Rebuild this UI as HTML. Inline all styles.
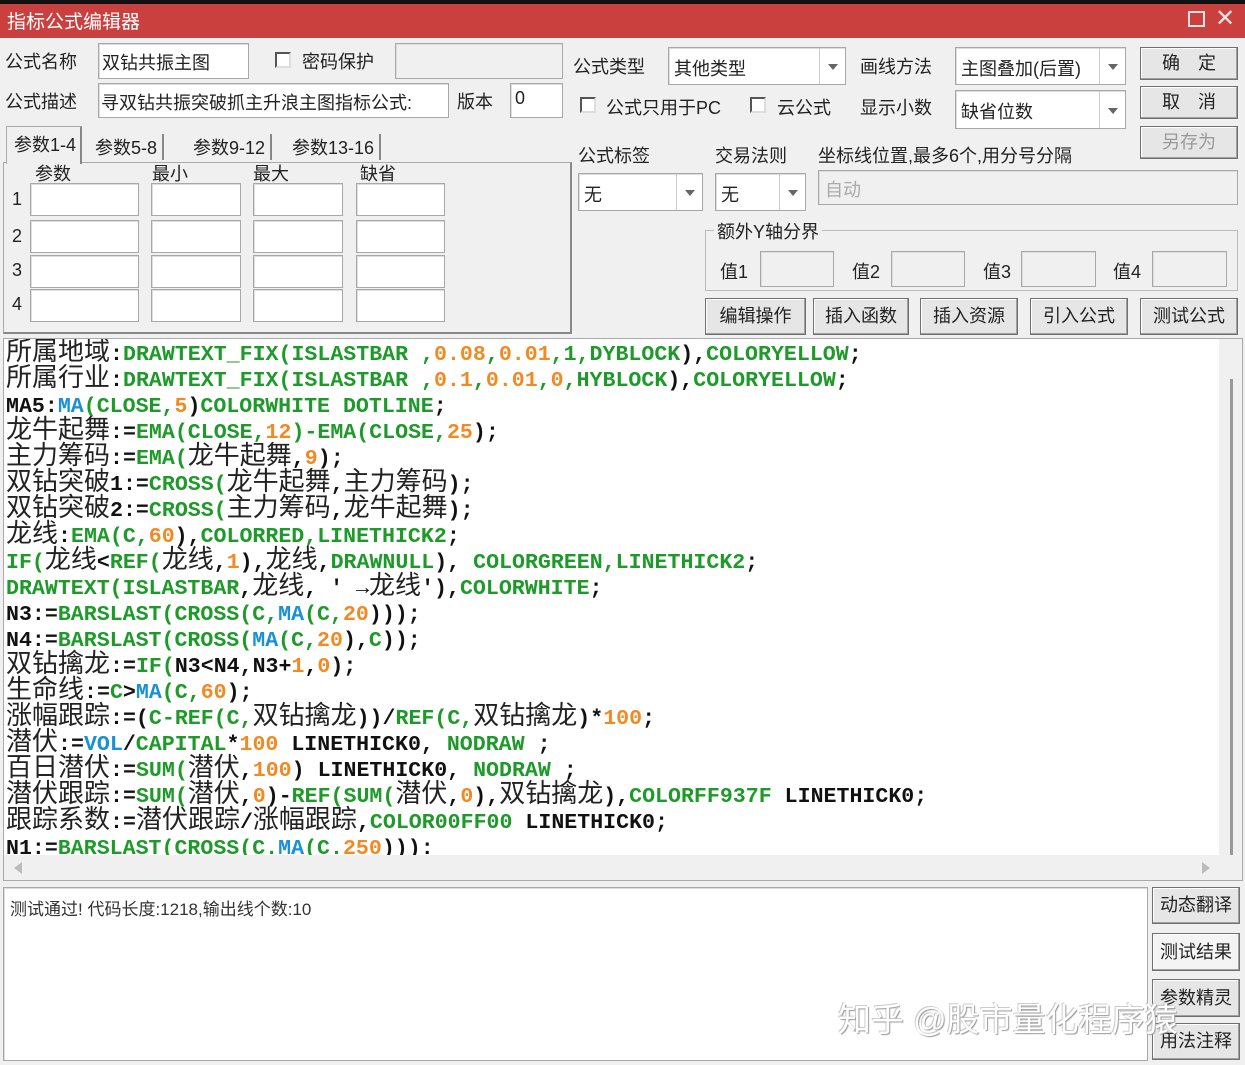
<!DOCTYPE html>
<html><head><meta charset="utf-8"><style>
*{margin:0;padding:0;box-sizing:border-box}
body{width:1245px;height:1065px;background:#f0f0f0;position:relative;overflow:hidden;font-family:"Liberation Sans","Noto Sans CJK SC",sans-serif;font-size:18px;color:#222}
.a{position:absolute;white-space:nowrap}
.in{position:absolute;background:#fff;border:1px solid #a8a8a8;box-shadow:inset 1px 1px 0 #ddd}
.btn{position:absolute;background:#e6e6e6;border:1px solid #707070;box-shadow:inset -1px -1px 0 #a0a0a0,inset 1px 1px 0 #fff;text-align:center;font-size:18px}
.cb{position:absolute;width:16px;height:16px;background:#fff;border:2px solid #555;border-right-color:#ddd;border-bottom-color:#ddd}
.dd{position:absolute;right:0;top:0;bottom:0;width:26px;border-left:1px solid #ccc}
.dd:after{content:"";position:absolute;left:8px;top:50%;margin-top:-2px;border:5px solid transparent;border-top:6px solid #666;border-bottom:0}
.code{position:absolute;left:3px;top:338px;width:1240px;height:543px;background:#fff;border:1px solid #aaa;overflow:hidden}
.l{position:absolute;left:2px;height:26px;line-height:26px;white-space:nowrap;font-family:"Liberation Mono",monospace;font-weight:bold;font-size:21.6px;color:#111}
.l i{font-style:normal;font-family:"Noto Sans CJK SC",sans-serif;font-weight:normal;font-size:26px;color:#222;line-height:0}
.g{color:#1e9a2a}.o{color:#f08a24}.b{color:#1a90d6}
</style></head><body>
<div class="a" style="left:0;top:0;width:1245px;height:4px;background:#111"></div>
<div class="a" style="left:0;top:4px;width:1245px;height:34px;background:#c9403f"></div>
<div class="a" style="left:7px;top:7px;color:#fff;font-size:19px">指标公式编辑器</div>
<div class="a" style="left:1188px;top:11px;width:17px;height:16px;border:2px solid #fff;opacity:.85"></div>
<div class="a" style="left:1215px;top:4px;color:#fff;font-size:24px;opacity:.85">✕</div>

<div class="a" style="left:5px;top:48px">公式名称</div>
<div class="in" style="left:98px;top:43px;width:151px;height:36px"></div>
<div class="a" style="left:102px;top:49px">双钻共振主图</div>
<div class="cb" style="left:275px;top:52px"></div>
<div class="a" style="left:302px;top:48px">密码保护</div>
<div class="in" style="left:395px;top:43px;width:168px;height:36px;background:#f0f0f0"></div>
<div class="a" style="left:5px;top:88px">公式描述</div>
<div class="in" style="left:98px;top:83px;width:351px;height:35px"></div>
<div class="a" style="left:101px;top:89px;width:345px;overflow:hidden">寻双钻共振突破抓主升浪主图指标公式:</div>
<div class="a" style="left:457px;top:88px">版本</div>
<div class="in" style="left:510px;top:83px;width:53px;height:35px"></div>
<div class="a" style="left:515px;top:88px">0</div>

<div class="a" style="left:573px;top:53px">公式类型</div>
<div class="in" style="left:668px;top:47px;width:178px;height:38px"><div class="dd"></div></div>
<div class="a" style="left:674px;top:55px">其他类型</div>
<div class="a" style="left:860px;top:53px">画线方法</div>
<div class="in" style="left:955px;top:47px;width:171px;height:38px"><div class="dd"></div></div>
<div class="a" style="left:961px;top:55px">主图叠加(后置)</div>
<div class="cb" style="left:580px;top:97px"></div>
<div class="a" style="left:606px;top:94px">公式只用于PC</div>
<div class="cb" style="left:750px;top:97px"></div>
<div class="a" style="left:777px;top:94px">云公式</div>
<div class="a" style="left:860px;top:94px">显示小数</div>
<div class="in" style="left:955px;top:90px;width:171px;height:39px"><div class="dd"></div></div>
<div class="a" style="left:961px;top:98px">缺省位数</div>
<div class="btn" style="left:1140px;top:47px;width:98px;height:33px;line-height:31px">确　定</div>
<div class="btn" style="left:1140px;top:86px;width:98px;height:33px;line-height:31px">取　消</div>
<div class="btn" style="left:1140px;top:126px;width:98px;height:33px;line-height:31px;color:#999">另存为</div>

<div class="a" style="left:3px;top:162px;width:569px;height:172px;border:1px solid #aaa;border-right:2px solid #888;border-bottom:2px solid #888"></div>
<div class="a" style="left:6px;top:126px;width:76px;height:38px;background:#f0f0f0;border:1px solid #aaa;border-bottom:none;border-right:2px solid #888"></div>
<div class="a" style="left:14px;top:131px">参数1-4</div>
<div class="a" style="left:95px;top:134px;border-right:2px solid #888;padding-right:5px">参数5-8</div>
<div class="a" style="left:163px;top:134px;border-right:2px solid #888;padding:0 5px 0 30px">参数9-12</div>
<div class="a" style="left:246px;top:134px;border-right:2px solid #888;padding:0 5px 0 46px">参数13-16</div>
<div class="a" style="left:35px;top:160px">参数</div>
<div class="a" style="left:152px;top:160px">最小</div>
<div class="a" style="left:253px;top:160px">最大</div>
<div class="a" style="left:360px;top:160px">缺省</div>
<div class="a" style="left:12px;top:189px">1</div><div class="a" style="left:12px;top:226px">2</div><div class="a" style="left:12px;top:260px">3</div><div class="a" style="left:12px;top:294px">4</div>
<div class="in" style="left:30px;top:183px;width:109px;height:33px"></div><div class="in" style="left:151px;top:183px;width:90px;height:33px"></div><div class="in" style="left:253px;top:183px;width:90px;height:33px"></div><div class="in" style="left:356px;top:183px;width:89px;height:33px"></div>
<div class="in" style="left:30px;top:220px;width:109px;height:33px"></div><div class="in" style="left:151px;top:220px;width:90px;height:33px"></div><div class="in" style="left:253px;top:220px;width:90px;height:33px"></div><div class="in" style="left:356px;top:220px;width:89px;height:33px"></div>
<div class="in" style="left:30px;top:255px;width:109px;height:33px"></div><div class="in" style="left:151px;top:255px;width:90px;height:33px"></div><div class="in" style="left:253px;top:255px;width:90px;height:33px"></div><div class="in" style="left:356px;top:255px;width:89px;height:33px"></div>
<div class="in" style="left:30px;top:289px;width:109px;height:33px"></div><div class="in" style="left:151px;top:289px;width:90px;height:33px"></div><div class="in" style="left:253px;top:289px;width:90px;height:33px"></div><div class="in" style="left:356px;top:289px;width:89px;height:33px"></div>

<div class="a" style="left:578px;top:142px">公式标签</div>
<div class="a" style="left:715px;top:142px">交易法则</div>
<div class="a" style="left:818px;top:142px">坐标线位置,最多6个,用分号分隔</div>
<div class="in" style="left:578px;top:173px;width:125px;height:38px"><div class="dd"></div></div>
<div class="a" style="left:584px;top:181px">无</div>
<div class="in" style="left:715px;top:173px;width:91px;height:38px"><div class="dd"></div></div>
<div class="a" style="left:721px;top:181px">无</div>
<div class="in" style="left:818px;top:170px;width:420px;height:35px;background:#f0f0f0"></div>
<div class="a" style="left:825px;top:176px;color:#aaa">自动</div>
<div class="a" style="left:705px;top:230px;width:533px;height:61px;border:1px solid #bbb"></div>
<div class="a" style="left:714px;top:218px;background:#f0f0f0;padding:0 3px">额外Y轴分界</div>
<div class="a" style="left:720px;top:258px">值1</div><div class="in" style="left:760px;top:251px;width:74px;height:36px;background:#f0f0f0"></div>
<div class="a" style="left:852px;top:258px">值2</div><div class="in" style="left:891px;top:251px;width:74px;height:36px;background:#f0f0f0"></div>
<div class="a" style="left:983px;top:258px">值3</div><div class="in" style="left:1021px;top:251px;width:75px;height:36px;background:#f0f0f0"></div>
<div class="a" style="left:1113px;top:258px">值4</div><div class="in" style="left:1152px;top:251px;width:75px;height:36px;background:#f0f0f0"></div>
<div class="btn" style="left:705px;top:298px;width:101px;height:37px;line-height:35px">编辑操作</div>
<div class="btn" style="left:813px;top:298px;width:96px;height:37px;line-height:35px">插入函数</div>
<div class="btn" style="left:920px;top:298px;width:98px;height:37px;line-height:35px">插入资源</div>
<div class="btn" style="left:1030px;top:298px;width:98px;height:37px;line-height:35px">引入公式</div>
<div class="btn" style="left:1140px;top:298px;width:98px;height:37px;line-height:35px">测试公式</div>

<div class="code">
<div class="l" style="top:3px"><i>所属地域</i>:<span class="g">DRAWTEXT_FIX(ISLASTBAR ,</span><span class="o">0.08</span><span class="g">,</span><span class="o">0.01</span><span class="g">,1,DYBLOCK</span>),<span class="g">COLORYELLOW</span>;</div>
<div class="l" style="top:29px"><i>所属行业</i>:<span class="g">DRAWTEXT_FIX(ISLASTBAR ,</span><span class="o">0.1</span><span class="g">,</span><span class="o">0.01</span><span class="g">,</span><span class="o">0</span><span class="g">,HYBLOCK</span>),<span class="g">COLORYELLOW</span>;</div>
<div class="l" style="top:55px">MA5:<span class="b">MA</span><span class="g">(CLOSE,</span><span class="o">5</span>)<span class="g">COLORWHITE DOTLINE</span>;</div>
<div class="l" style="top:81px"><i>龙牛起舞</i>:=<span class="g">EMA(CLOSE,</span><span class="o">12</span><span class="g">)-EMA(CLOSE,</span><span class="o">25</span>);</div>
<div class="l" style="top:107px"><i>主力筹码</i>:=<span class="g">EMA(</span><i>龙牛起舞</i>,<span class="o">9</span>);</div>
<div class="l" style="top:133px"><i>双钻突破</i>1:=<span class="g">CROSS(</span><i>龙牛起舞</i>,<i>主力筹码</i>);</div>
<div class="l" style="top:159px"><i>双钻突破</i>2:=<span class="g">CROSS(</span><i>主力筹码</i>,<i>龙牛起舞</i>);</div>
<div class="l" style="top:185px"><i>龙线</i>:<span class="g">EMA(C,</span><span class="o">60</span>),<span class="g">COLORRED,LINETHICK2</span>;</div>
<div class="l" style="top:211px"><span class="g">IF(</span><i>龙线</i>&lt;<span class="g">REF(</span><i>龙线</i>,<span class="o">1</span>),<i>龙线</i>,<span class="g">DRAWNULL</span>), <span class="g">COLORGREEN,LINETHICK2</span>;</div>
<div class="l" style="top:237px"><span class="g">DRAWTEXT(ISLASTBAR</span>,<i>龙线</i>, ' →<i>龙线</i>'),<span class="g">COLORWHITE</span>;</div>
<div class="l" style="top:263px">N3:=<span class="g">BARSLAST(CROSS(C,</span><span class="b">MA</span><span class="g">(C,</span><span class="o">20</span>)));</div>
<div class="l" style="top:289px">N4:=<span class="g">BARSLAST(CROSS(</span><span class="b">MA</span><span class="g">(C,</span><span class="o">20</span>),<span class="g">C</span>));</div>
<div class="l" style="top:315px"><i>双钻擒龙</i>:=<span class="g">IF(</span>N3&lt;N4,N3+<span class="o">1</span>,<span class="o">0</span>);</div>
<div class="l" style="top:341px"><i>生命线</i>:=<span class="g">C</span>&gt;<span class="b">MA</span><span class="g">(C,</span><span class="o">60</span>);</div>
<div class="l" style="top:367px"><i>涨幅跟踪</i>:=(<span class="g">C-REF(C,</span><i>双钻擒龙</i>))/<span class="g">REF(C,</span><i>双钻擒龙</i>)*<span class="o">100</span>;</div>
<div class="l" style="top:393px"><i>潜伏</i>:=<span class="b">VOL</span>/<span class="g">CAPITAL</span>*<span class="o">100</span> LINETHICK0, <span class="g">NODRAW</span> ;</div>
<div class="l" style="top:419px"><i>百日潜伏</i>:=<span class="g">SUM(</span><i>潜伏</i>,<span class="o">100</span>) LINETHICK0, <span class="g">NODRAW</span> ;</div>
<div class="l" style="top:445px"><i>潜伏跟踪</i>:=<span class="g">SUM(</span><i>潜伏</i>,<span class="o">0</span>)-<span class="g">REF(SUM(</span><i>潜伏</i>,<span class="o">0</span>),<i>双钻擒龙</i>),<span class="g">COLORFF937F</span> LINETHICK0;</div>
<div class="l" style="top:471px"><i>跟踪系数</i>:=<i>潜伏跟踪</i>/<i>涨幅跟踪</i>,<span class="g">COLOR00FF00</span> LINETHICK0;</div>
<div class="l" style="top:497px">N1:=<span class="g">BARSLAST(CROSS(C.</span><span class="b">MA</span><span class="g">(C.</span><span class="o">250</span>))):</div>
<div class="a" style="left:0;top:516px;width:1240px;height:27px;background:#f0f0f0"></div>
<div class="a" style="left:10px;top:523px;border:6px solid transparent;border-right:8px solid #bbb;border-left:0"></div>
<div class="a" style="left:1198px;top:523px;border:6px solid transparent;border-left:8px solid #bbb;border-right:0"></div>
<div class="a" style="left:1215px;top:0;width:25px;height:516px;background:#f0f0f0"></div>
<div class="a" style="left:1226px;top:40px;width:3px;height:476px;background:#999"></div>
</div>

<div class="in" style="left:3px;top:887px;width:1145px;height:174px"></div>
<div class="a" style="left:10px;top:895px;font-size:17px;color:#333">测试通过! 代码长度:1218,输出线个数:10</div>
<div class="btn" style="left:1152px;top:887px;width:88px;height:37px;line-height:35px">动态翻译</div>
<div class="btn" style="left:1152px;top:933px;width:88px;height:38px;line-height:36px;background:#f4f4f4">测试结果</div>
<div class="btn" style="left:1152px;top:979px;width:88px;height:38px;line-height:36px">参数精灵</div>
<div class="btn" style="left:1152px;top:1023px;width:88px;height:37px;line-height:35px">用法注释</div>
<div class="a" style="left:838px;top:993px;font-size:33px;color:#fff;text-shadow:1px 1px 1px #999,-1px -1px 0 #ccc">知乎 @股市量化程序猿</div>
</body></html>
